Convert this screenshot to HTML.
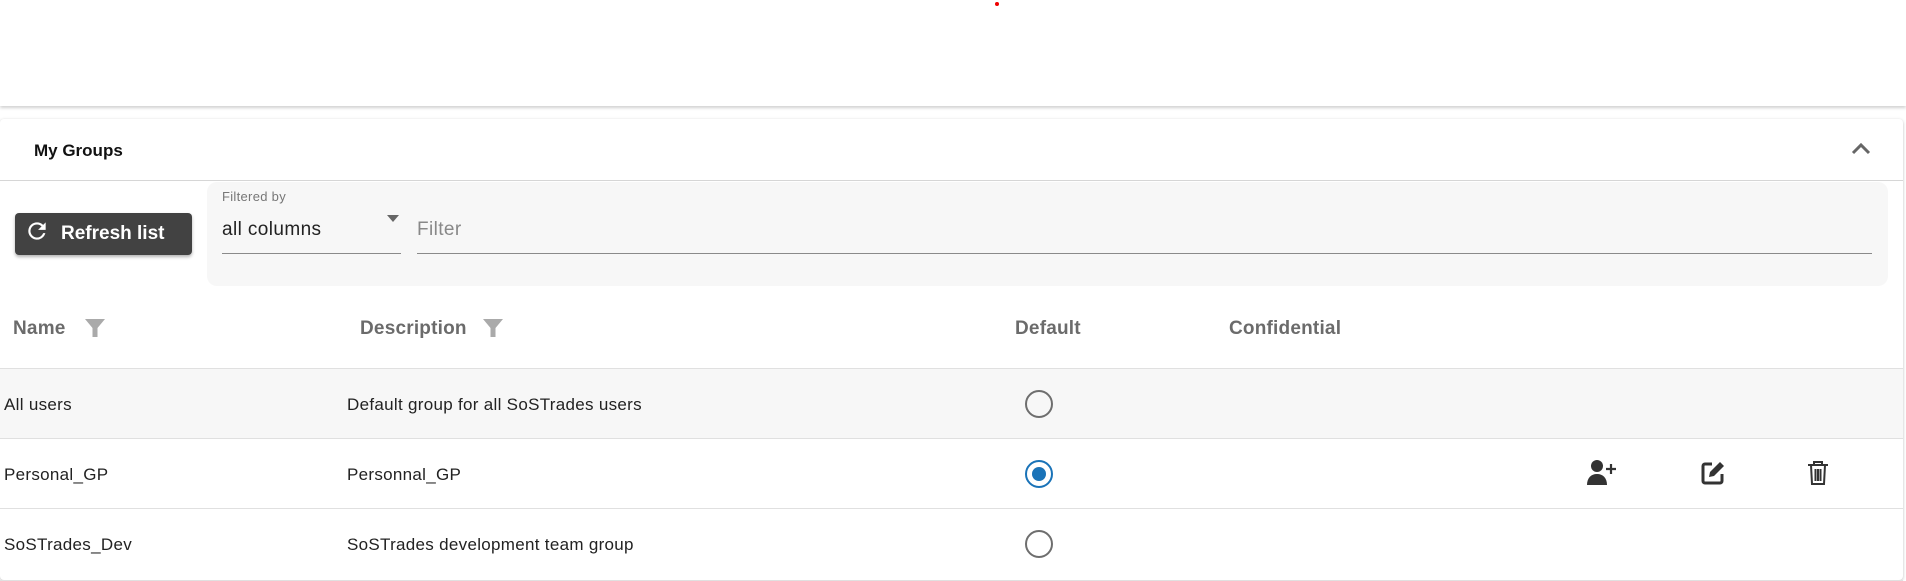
<!DOCTYPE html>
<html><head><style>
body{margin:0;width:1906px;height:581px;background:#fff;font-family:"Liberation Sans",sans-serif;position:relative;overflow:hidden}
.a{position:absolute}
.t{position:absolute;white-space:nowrap}
.hd{color:#6b6b6b;font-size:19px;font-weight:bold;top:318px;letter-spacing:0.2px}
.rw{left:0;width:1903px;height:70px;border-top:1px solid #e0e0e0}
.cell{font-size:17px;color:#222;letter-spacing:0.3px}
.radio{position:absolute;left:1025px;width:28px;height:28px;border:2.5px solid #6e6e6e;border-radius:50%;box-sizing:border-box}
</style></head><body>
<div class="a" style="left:0;top:0;width:1906px;height:106px;background:#fff;box-shadow:0 2px 3px rgba(0,0,0,.18)"></div>
<div class="a" style="left:995px;top:2px;width:4px;height:4px;border-radius:50%;background:#e00"></div>
<div class="a" style="left:0;top:119px;width:1903px;height:461px;background:#fff;border-radius:4px;box-shadow:0 1px 3px rgba(0,0,0,.25)"></div>
<div class="t" style="left:34px;top:141px;font-size:17px;color:#111;font-weight:bold">My Groups</div>
<svg class="a" style="left:1850px;top:138px" width="22" height="20" viewBox="0 0 22 20"><path d="M3 15 L11 7 L19 15" fill="none" stroke="#666" stroke-width="3"/></svg>
<div class="a" style="left:0;top:180px;width:1903px;height:1px;background:#d6d6d6"></div>
<div class="a" style="left:15px;top:213px;width:177px;height:42px;background:#424242;border-radius:4px;box-shadow:0 2px 3px rgba(0,0,0,.3)"></div>
<svg class="a" style="left:24px;top:218px" width="26" height="26" viewBox="0 0 24 24"><path fill="#fff" d="M17.65 6.35A7.96 7.96 0 0 0 12 4a8 8 0 1 0 7.73 10h-2.08A6 6 0 1 1 12 6c1.66 0 3.14.69 4.22 1.78L13 11h7V4l-2.35 2.35z"/></svg>
<div class="t" style="left:61px;top:223px;font-size:19px;color:#fff;font-weight:bold">Refresh list</div>
<div class="a" style="left:207px;top:182px;width:1681px;height:104px;background:#f7f7f7;border-radius:10px"></div>
<div class="t" style="left:222px;top:189px;font-size:13px;color:#777;letter-spacing:0.3px">Filtered by</div>
<div class="t" style="left:222px;top:219px;font-size:19px;color:#222;letter-spacing:0.4px">all columns</div>
<div class="a" style="left:222px;top:253px;width:179px;height:1px;background:#8a8a8a"></div>
<div class="a" style="left:387px;top:215px;width:0;height:0;border-left:6px solid transparent;border-right:6px solid transparent;border-top:7px solid #666"></div>
<div class="t" style="left:417px;top:219px;font-size:19px;color:#888;letter-spacing:0.4px">Filter</div>
<div class="a" style="left:417px;top:253px;width:1455px;height:1px;background:#8a8a8a"></div>
<div class="t hd" style="left:13px">Name</div>
<svg class="a" style="left:84px;top:318px" width="22" height="20" viewBox="0 0 22 20"><path fill="#aaa" d="M1 1h20l-7.5 9v9h-5v-9z"/></svg>
<div class="t hd" style="left:360px">Description</div>
<svg class="a" style="left:482px;top:318px" width="22" height="20" viewBox="0 0 22 20"><path fill="#aaa" d="M1 1h20l-7.5 9v9h-5v-9z"/></svg>
<div class="t hd" style="left:1015px">Default</div>
<div class="t hd" style="left:1229px">Confidential</div>
<div class="a rw" style="top:368px;background:#f7f7f7"></div>
<div class="a rw" style="top:438px"></div>
<div class="a rw" style="top:508px;height:71px;border-bottom:1px solid #e0e0e0"></div>
<div class="t cell" style="left:4px;top:395px">All users</div>
<div class="t cell" style="left:347px;top:395px">Default group for all SoSTrades users</div>
<div class="radio" style="top:390px"></div>
<div class="t cell" style="left:4px;top:465px">Personal_GP</div>
<div class="t cell" style="left:347px;top:465px">Personnal_GP</div>
<div class="radio" style="top:460px;border-color:#1a73b8"></div>
<div class="a" style="left:1032px;top:467px;width:14px;height:14px;border-radius:50%;background:#1a73b8"></div>
<div class="t cell" style="left:4px;top:535px">SoSTrades_Dev</div>
<div class="t cell" style="left:347px;top:535px">SoSTrades development team group</div>
<div class="radio" style="top:530px"></div>
<svg class="a" style="left:1587px;top:459px" width="30" height="26" viewBox="0 0 30 26"><circle cx="10" cy="7" r="6" fill="#333"/><path fill="#333" d="M0 26c0-7 4-11 10-11s10 4 10 11z"/><path d="M24 5v10M19 10h10" stroke="#333" stroke-width="2.2"/></svg>
<svg class="a" style="left:1700px;top:460px" width="26" height="26" viewBox="0 0 26 26"><path d="M12 4H5a2 2 0 0 0-2 2v15a2 2 0 0 0 2 2h15a2 2 0 0 0 2-2v-7" fill="none" stroke="#333" stroke-width="3"/><path fill="#333" d="M9 17l1-5L20 2l4 4-10 10z"/></svg>
<svg class="a" style="left:1807px;top:460px" width="22" height="26" viewBox="0 0 22 26"><path d="M7 4V2h8v2M1 5h20M4 5l1 19h12l1-19M8.5 9v12M11 9v12M13.5 9v12" fill="none" stroke="#333" stroke-width="2"/></svg>
</body></html>
